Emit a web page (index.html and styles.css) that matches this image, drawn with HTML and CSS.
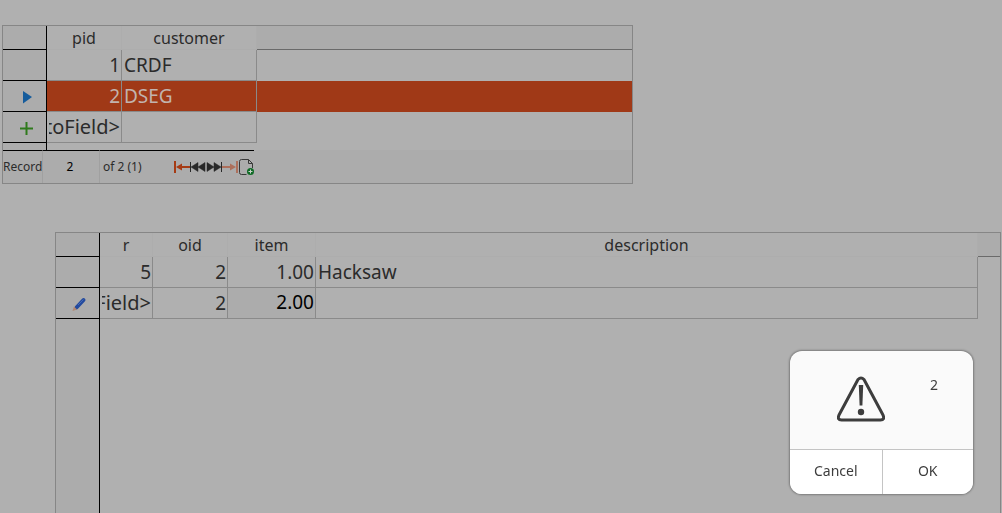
FILE: index.html
```html
<!DOCTYPE html>
<html lang="en">
<head>
  <meta charset="UTF-8" />
  <meta name="viewport" content="width=device-width, initial-scale=1.0"/>
  <title>Orders</title>
  <link rel="stylesheet" href="styles.css">
</head>
<body>
<main class="form">
  <section class="grid customers">
    <table>
      <colgroup>
        <col class="col-marker"><col class="col-id"><col class="col-customer"><col>
      </colgroup>
      <thead>
        <tr><th class="marker"></th><th>pid</th><th>customer</th><th class="filler"></th></tr>
      </thead>
      <tbody>
        <tr><td class="marker"></td><td class="num">1</td><td>CRDF</td><td class="filler"></td></tr>
        <tr class="selected">
          <td class="marker"><svg width="44" height="30" viewBox="0 0 44 30"><path d="M20 10l9 6-9 6.500z" fill="#165c9c"/></svg></td>
          <td class="num">2</td><td>DSEG</td><td class="filler"></td>
        </tr>
        <tr>
          <td class="marker"><svg width="44" height="30" viewBox="0 0 44 30"><path d="M23.500 10v13M17 16.500h13" stroke="#2f7a1c" stroke-width="2"/></svg></td>
          <td class="num"><div class="auto">&lt;AutoField&gt;</div></td><td></td><td class="filler"></td>
        </tr>
        <tr class="rest"><td class="marker"></td><td class="filler" colspan="3"></td></tr>
      </tbody>
    </table>
    <div class="record-bar">
      <label class="record-label" for="record">Record</label>
      <input type="text" id="record" value="2">
      <span class="record-count">of 2 (1)</span>
      <div class="nav">
        <button aria-label="First record"><svg width="16" height="16" viewBox="0 0 16 16"><path d="M1 2v12" stroke="#a63b14" stroke-width="2"/><path d="M6 8h10" stroke="#a63b14" stroke-width="2"/><path d="M2 8l6-3.500v7z" fill="#a63b14"/></svg></button>
        <button aria-label="Previous record"><svg width="16" height="16" viewBox="0 0 16 16"><path d="M.5 3v10" stroke="#282828"/><path d="M1 8l7-4.500v9zM8 8l7-4.500v9z" fill="#282828" stroke="#282828" stroke-width=".5"/></svg></button>
        <button aria-label="Next record"><svg width="16" height="16" viewBox="0 0 16 16"><path d="M15.500 3v10" stroke="#282828"/><path d="M15 8L8 3.500v9zM8 8L1 3.500v9z" fill="#282828" stroke="#282828" stroke-width=".5"/></svg></button>
        <button aria-label="Last record" disabled><svg width="16" height="16" viewBox="0 0 16 16"><path d="M15 2v12" stroke="#ad705c" stroke-width="2"/><path d="M0 8h10" stroke="#ad705c" stroke-width="2"/><path d="M14 8L8 4.500v7z" fill="#ad705c"/></svg></button>
        <button aria-label="New record"><svg width="16" height="16" viewBox="0 0 16 16"><path d="M8.500 15.500H3.500a2 2 0 0 1-2-2v-11a2 2 0 0 1 2-2h7l4 4V9M10.500.5v4h4" fill="none" stroke="#383838"/><circle cx="12.500" cy="12.500" r="3.500" fill="#0f6b26"/><path d="M12.500 10.500v4M10.500 12.500h4" stroke="#c8d0c8"/></svg></button>
      </div>
    </div>
  </section>

  <section class="grid orders">
    <table>
      <colgroup>
        <col class="col-marker"><col class="col-r"><col class="col-id"><col class="col-item"><col><col class="col-end">
      </colgroup>
      <thead>
        <tr><th class="marker"></th><th>r</th><th>oid</th><th>item</th><th>description</th><th class="filler"></th></tr>
      </thead>
      <tbody>
        <tr><td class="marker"></td><td class="num">5</td><td class="num">2</td><td class="num">1.00</td><td>Hacksaw</td><td class="filler"></td></tr>
        <tr>
          <td class="marker"><svg width="44" height="30" viewBox="0 0 44 30"><path d="M20.500 19.500l7-7.500" stroke="#234a9e" stroke-width="4" stroke-linecap="round"/><path d="M22 17l5.500-5.500" stroke="#4468b4" stroke-width="1"/><path d="M18 18.500l3 3-4.500 1.500z" fill="#b08670"/></svg></td>
          <td class="num"><div class="auto">&lt;AutoField&gt;</div></td><td class="num">2</td>
          <td class="num editing"><input type="text" aria-label="item" value="2.00"></td><td></td><td class="filler"></td>
        </tr>
      </tbody>
    </table>
    <div class="empty"></div>
  </section>
</main>

<div class="dialog" role="alertdialog" aria-labelledby="message">
  <div class="dialog-body">
    <svg width="48" height="46" viewBox="0 0 48 46">
      <path d="M21 3.500Q24 .5 27 3.500L46 39Q48 44 43.500 44H4.500Q0 44 2 39z" fill="none" stroke="#3d3d3d" stroke-width="3" stroke-linejoin="round"/>
      <path d="M21.800 9h4.400l-.8 20.500h-2.800z" fill="#3d3d3d"/><circle cx="24" cy="36" r="3.200" fill="#3d3d3d"/>
    </svg>
    <span id="message">2</span>
  </div>
  <div class="dialog-buttons">
    <button>Cancel</button>
    <button>OK</button>
  </div>
</div>
</body>
</html>
```
FILE: styles.css
```css
* {
  box-sizing: border-box;
}
body {
  margin: 0;
  background-color: #b0b0b0;
  color: #2b2b2b;
  font-family: "Noto Sans", "Open Sans", sans-serif;
}
.form {
  display: flex;
  flex-direction: column;
  gap: 48px;
  min-height: 100vh;
  padding: 25px 1px 0 2px;
}
.grid {
  border: 1px solid #868686;
}
.customers {
  min-width: 400px;
  margin-right: 368px;
}
.orders {
  display: flex;
  flex-direction: column;
  flex: 1;
  margin-left: 53px;
  border-bottom: none;
}

table {
  width: 100%;
  table-layout: fixed;
  border-collapse: separate;
  border-spacing: 0;
}
.col-marker { width: 44px; }
.col-r { width: 53px; }
.col-id { width: 75px; }
.col-customer { width: 135px; }
.col-item { width: 88px; }
.col-end { width: 22px; }

th {
  height: 24px;
  padding: 0;
  font-size: 16px;
  font-weight: normal;
  line-height: 22px;
  border-right: 1px solid #adadad;
  border-bottom: 1px solid #adadad;
}
td {
  height: 31px;
  padding: 0 2px;
  font-size: 19px;
  line-height: 30px;
  border-right: 1px solid #8a8a8a;
  border-bottom: 1px solid #8a8a8a;
}
.num {
  padding-right: 1px;
  text-align: right;
}
.auto {
  display: flex;
  justify-content: flex-end;
  overflow: hidden;
  font-size: 20px;
}
th.marker, td.marker {
  padding: 0;
  border-right: 1px solid #000;
  border-bottom: 1px solid #000;
}
.marker, th.filler {
  background-color: #acacac;
}
th.filler {
  border-right: none;
  border-bottom: 1px solid #6a6a6a;
}
td.filler {
  border: none;
}
.marker svg {
  display: block;
}
.selected td:not(.marker) {
  background-color: #a03917;
  color: #c2b3ae;
}
.rest td {
  height: 7px;
  line-height: 7px;
}
.rest td.marker {
  border-bottom: none;
}
.editing input {
  display: block;
  width: 100%;
  height: 30px;
  padding: 0 0 2px;
  border: none;
  background: none;
  color: #000;
  font: inherit;
  text-align: right;
}
.editing {
  background-color: #acacac;
}

.record-bar {
  display: flex;
  height: 33px;
  background-color: #acacac;
  font-size: 12px;
  line-height: 32px;
}
.record-bar > * {
  border-top: 1px solid #000;
}
.record-label {
  width: 40px;
  border-right: 1px solid #a0a0a0;
}
#record {
  width: 57px;
  padding: 0 2px 0 0;
  border-width: 1px 1px 0 0;
  border-style: solid;
  border-color: #000 #a0a0a0;
  background: none;
  color: #000;
  font: inherit;
  text-align: center;
}
.record-count {
  width: 74px;
  padding-left: 3px;
}
.nav {
  display: flex;
}
.nav button {
  display: flex;
  align-items: center;
  width: 16px;
  padding: 0;
  border: none;
  background: none;
}
.empty {
  flex: 1;
  width: 44px;
  background-color: #acacac;
  border-right: 1px solid #000;
}

.dialog {
  position: fixed;
  right: 29px;
  bottom: 19px;
  width: 183px;
  border-radius: 12px;
  background-color: #fafafa;
  box-shadow: 0 0 2px 1px rgba(0,0,0,0.3);
  color: #3d3d3d;
  font-size: 14px;
  line-height: 18px;
  overflow: hidden;
}
.dialog-body {
  display: flex;
  gap: 45px;
  height: 98px;
  padding: 25px 34px 0 47px;
}
.dialog-buttons {
  display: grid;
  grid-template-columns: 1fr 1fr;
  border-top: 1px solid #c4c4c4;
  background-color: #fff;
}
.dialog-buttons button {
  height: 44px;
  padding: 0 0 2px;
  border: none;
  background: none;
  color: inherit;
  font: inherit;
}
.dialog-buttons button + button {
  border-left: 1px solid #c4c4c4;
}
```
